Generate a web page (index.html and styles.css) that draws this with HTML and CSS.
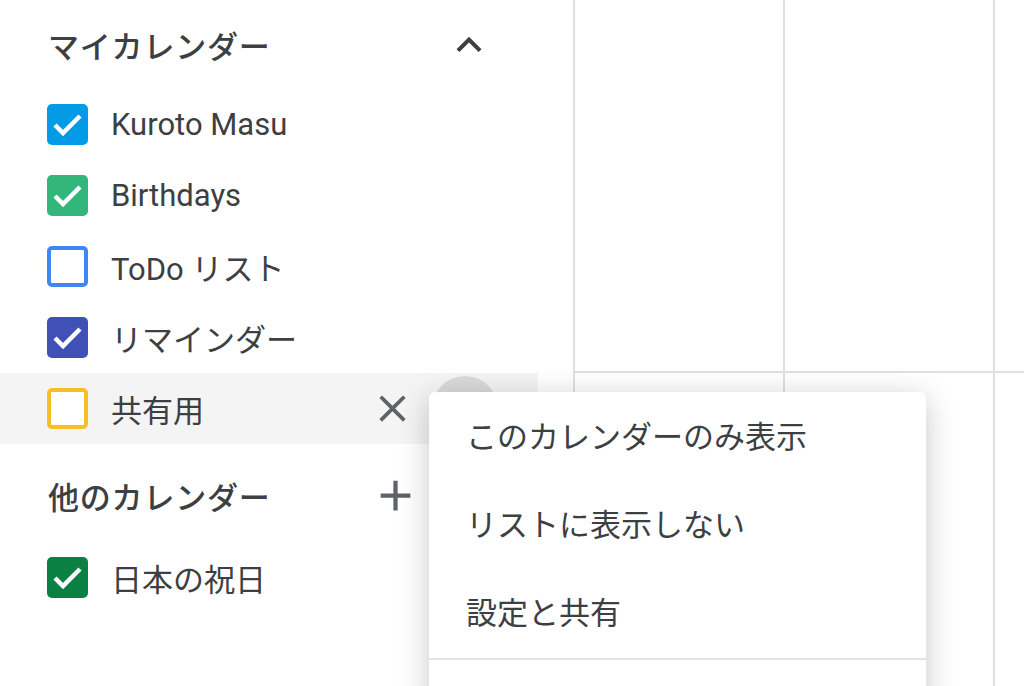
FILE: index.html
```html
<!DOCTYPE html>
<html lang="ja">
<head>
    <meta charset="UTF-8">
    <meta name="viewport" content="width=device-width, initial-scale=1.0">
    <title>マイカレンダー</title>
    <link rel="stylesheet" href="styles.css">
</head>
<body>
    <div class="sidebar">
        <div class="section-head first">
            <span class="section-title">マイカレンダー</span>
            <span class="icon-btn">
                <svg width="50" height="50" viewBox="0 0 24 24"><path d="M12 8l-6 6 1.41 1.41L12 10.83l4.59 4.58L18 14z" fill="#3c4043"/></svg>
            </span>
        </div>

        <div class="cal-row">
            <span class="check filled blue">
                <svg viewBox="0 0 41 41"><polyline points="8,21 16,29 33,12" /></svg>
            </span>
            <span class="cal-name">Kuroto Masu</span>
        </div>
        <div class="cal-row">
            <span class="check filled green">
                <svg viewBox="0 0 41 41"><polyline points="8,21 16,29 33,12" /></svg>
            </span>
            <span class="cal-name">Birthdays</span>
        </div>
        <div class="cal-row">
            <span class="check outline todo"></span>
            <span class="cal-name">ToDo リスト</span>
        </div>
        <div class="cal-row">
            <span class="check filled indigo">
                <svg viewBox="0 0 41 41"><polyline points="8,21 16,29 33,12" /></svg>
            </span>
            <span class="cal-name">リマインダー</span>
        </div>
        <div class="cal-row hover">
            <span class="check outline shared"></span>
            <span class="cal-name">共有用</span>
            <span class="close-btn">
                <svg width="45" height="45" viewBox="0 0 24 24"><path d="M19 6.41L17.59 5 12 10.59 6.41 5 5 6.41 10.59 12 5 17.59 6.41 19 12 13.41 17.59 19 19 17.59 13.41 12z" fill="#5f6368"/></svg>
            </span>
            <span class="more-btn"></span>
        </div>

        <div class="section-head second">
            <span class="section-title">他のカレンダー</span>
            <span class="icon-btn">
                <svg width="51" height="51" viewBox="0 0 24 24"><path d="M19 13h-6v6h-2v-6H5v-2h6V5h2v6h6v2z" fill="#5f6368"/></svg>
            </span>
            <span class="icon-btn">
                <svg width="50" height="50" viewBox="0 0 24 24"><path d="M12 8l-6 6 1.41 1.41L12 10.83l4.59 4.58L18 14z" fill="#3c4043"/></svg>
            </span>
        </div>

        <div class="cal-row">
            <span class="check filled holiday">
                <svg viewBox="0 0 41 41"><polyline points="8,21 16,29 33,12" /></svg>
            </span>
            <span class="cal-name">日本の祝日</span>
        </div>
    </div>

    <div class="grid">
        <div class="cell top"></div>
        <div class="cell top"></div>
        <div class="cell top"></div>
        <div class="cell"></div>
        <div class="cell"></div>
        <div class="cell"></div>
    </div>

    <!-- options menu for 共有用 -->
    <div class="menu">
        <div class="menu-item">このカレンダーのみ表示</div>
        <div class="menu-item">リストに表示しない</div>
        <div class="menu-item">設定と共有</div>
        <div class="menu-divider"></div>
    </div>
</body>
</html>
```

FILE: styles.css
```css
body {
  font-family: Roboto, "Noto Sans CJK JP", sans-serif;
  margin: 0;
  padding: 0;
  display: flex;
  height: 686px;
  overflow: hidden;
  background-color: #fff;
  color: #3c4043;
}

.sidebar {
  width: 573px;
  flex: none;
}

.section-head {
  display: flex;
  align-items: center;
  width: 538px;
  box-sizing: border-box;
  padding-left: 48px;
  padding-right: 32px;
}

.section-head.first {
  height: 89px;
}

.section-head.second {
  height: 98px;
  padding-top: 4px;
}

.section-title {
  flex: 1;
  font-size: 31px;
  font-weight: 500;
  letter-spacing: 0.8px;
}

.icon-btn {
  width: 74px;
  height: 74px;
  display: flex;
  align-items: center;
  justify-content: center;
}

.cal-row {
  display: flex;
  align-items: center;
  width: 538px;
  height: 71px;
  box-sizing: border-box;
  padding-left: 47px;
  padding-right: 40px;
}

.cal-row.hover {
  background-color: #f4f4f4;
}

.check {
  width: 41px;
  height: 41px;
  box-sizing: border-box;
  border-radius: 5px;
  flex: none;
  display: flex;
}

.check svg {
  width: 41px;
  height: 41px;
}

.check polyline {
  fill: none;
  stroke: #fff;
  stroke-width: 4.5;
}

.check.outline {
  border: 4px solid;
  background-color: #fff;
}

.blue { background-color: #039be5; }
.green { background-color: #33b679; }
.indigo { background-color: #3f51b5; }
.holiday { background-color: #0b8043; }
.todo { border-color: #4285f4 !important; }
.shared { border-color: #f6bf26 !important; }

.cal-name {
  flex: 1;
  margin-left: 23px;
  font-size: 31px;
  white-space: nowrap;
  padding-bottom: 1px;
}

.close-btn {
  width: 45px;
  height: 45px;
  display: flex;
}

.more-btn {
  width: 66px;
  height: 66px;
  margin-left: 17px;
  border-radius: 50%;
  background-color: #dadada;
}

.grid {
  flex: 1;
  display: grid;
  grid-template-columns: 210px 210px 1fr;
  grid-template-rows: 373px 1fr;
}

.cell {
  border-left: 2px solid #dfe0e4;
}

.cell.top {
  border-bottom: 2px solid #dfe0e4;
}

.menu {
  position: absolute;
  left: 429px;
  top: 392px;
  width: 497px;
  height: 320px;
  background-color: #fff;
  border-radius: 6px;
  box-shadow: 0 6px 30px rgba(0, 0, 0, 0.22);
}

.menu-item {
  height: 88px;
  display: flex;
  align-items: center;
  padding-left: 37px;
  padding-bottom: 3px;
  box-sizing: border-box;
  font-size: 31px;
  white-space: nowrap;
}

.menu-divider {
  margin-top: 2px;
  border-top: 2px solid #e3e3e3;
}
```
